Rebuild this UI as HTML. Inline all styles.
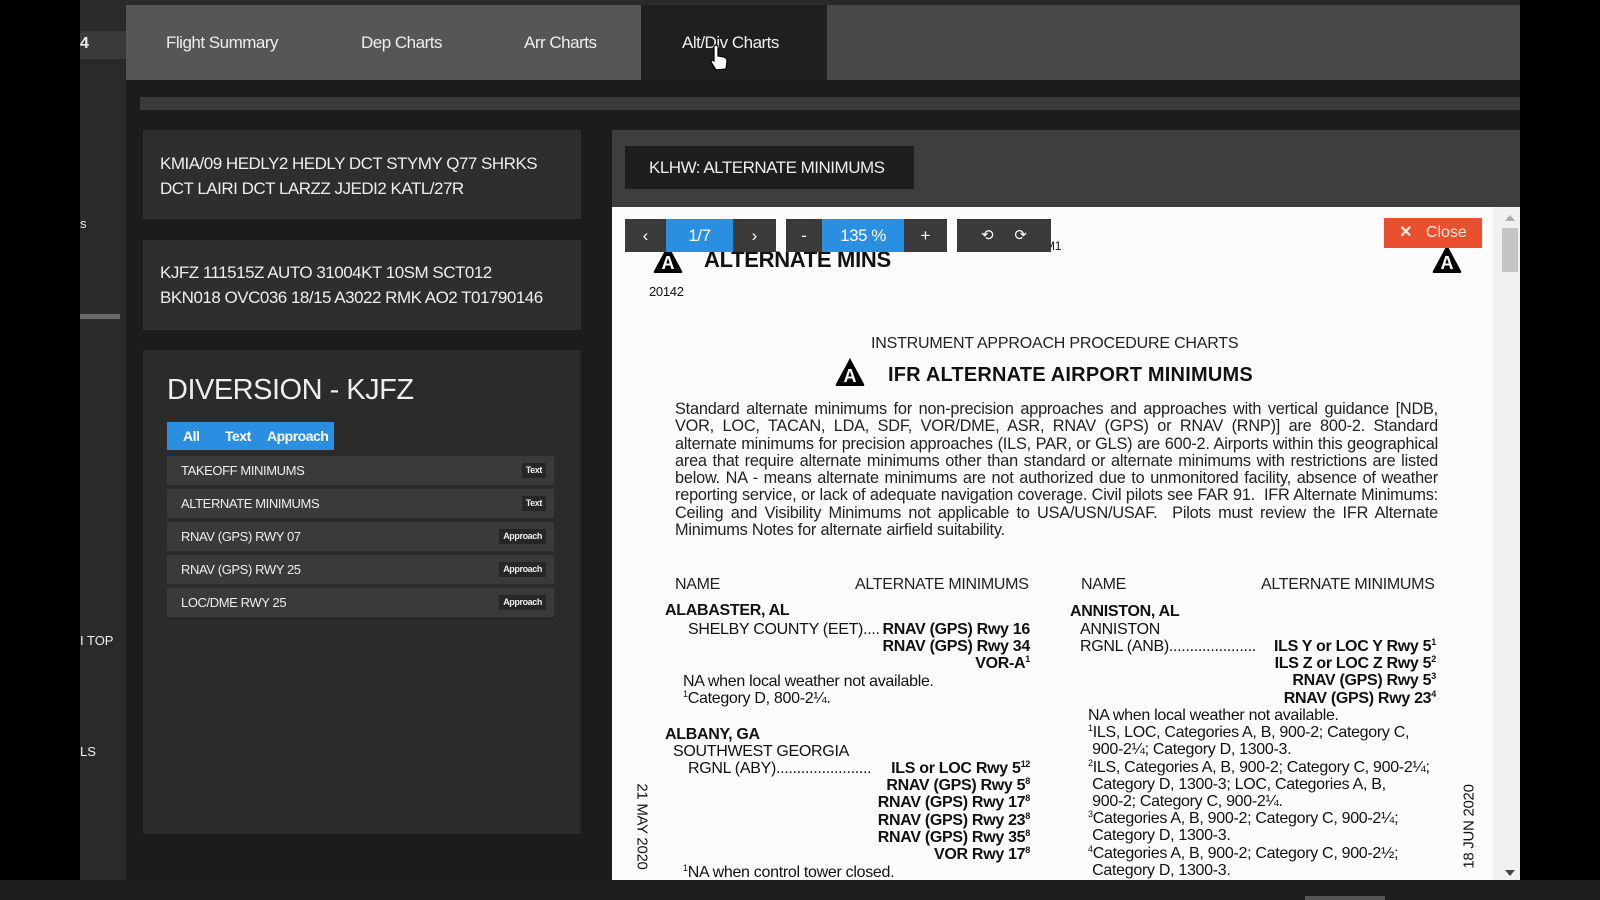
<!DOCTYPE html>
<html><head><meta charset="utf-8"><style>
*{margin:0;padding:0;box-sizing:border-box}
body{width:1600px;height:900px;background:#000;position:relative;overflow:hidden;font-family:"Liberation Sans",sans-serif}
.a{position:absolute;white-space:nowrap}
.n{font-family:"Liberation Sans Narrow","Liberation Sans",sans-serif;letter-spacing:-0.5px}
.w{color:#eee}
.doc{color:#111;font-family:"Liberation Sans Narrow","Liberation Sans",sans-serif;font-size:16px;line-height:17px;letter-spacing:-0.3px}
.r{text-align:right}
sup{font-size:9px;vertical-align:top;line-height:9px}
.tb{position:absolute;top:219px;height:33px;color:#fff;font-size:17px;text-align:center;line-height:33px}
.row{position:absolute;left:167px;width:387px;height:29px;background:#3a3a3a;color:#eee;font-size:13px;line-height:29px;padding-left:14px;font-family:"Liberation Sans Narrow","Liberation Sans",sans-serif;letter-spacing:-0.4px}
.bd{position:absolute;right:8px;top:7px;background:#262626;color:#eee;font-size:9px;line-height:15px;padding:0 4px;font-weight:bold}
.tri{position:absolute;width:0;height:0}
</style></head><body>
<div class="a" style="left:80px;top:0;width:46px;height:900px;background:#2a2a2a"></div>
<div class="a" style="left:80px;top:31px;width:46px;height:28px;background:#3a3a3a"></div>
<div class="a w" style="left:80px;top:35px;font-size:16px;font-weight:bold">4</div>
<div class="a w" style="left:80px;top:216px;font-size:13px">s</div>
<div class="a" style="left:80px;top:314px;width:40px;height:5px;background:#6a6a6a"></div>
<div class="a w" style="left:80px;top:633px;font-size:13px">I TOP</div>
<div class="a w" style="left:80px;top:744px;font-size:13px">LS</div>
<div class="a" style="left:126px;top:0;width:1394px;height:900px;background:#1c1c1c"></div>
<div class="a" style="left:126px;top:0;width:1394px;height:5px;background:#2a2a2a"></div>
<div class="a" style="left:126px;top:5px;width:515px;height:75px;background:#565656"></div>
<div class="a" style="left:641px;top:5px;width:186px;height:75px;background:#1f1f1f"></div>
<div class="a" style="left:827px;top:5px;width:693px;height:75px;background:#484848"></div>
<div class="a n w" style="left:166px;top:33px;font-size:17px">Flight Summary</div>
<div class="a n w" style="left:361px;top:33px;font-size:17px">Dep Charts</div>
<div class="a n w" style="left:524px;top:33px;font-size:17px">Arr Charts</div>
<div class="a n w" style="left:682px;top:33px;font-size:17px">Alt/Div Charts</div>
<div class="a" style="left:140px;top:97px;width:1380px;height:13px;background:#3a3a3a"></div>
<div class="a" style="left:143px;top:130px;width:438px;height:89px;background:#2e2e2e"></div>
<div class="a n w" style="left:160px;top:151px;font-size:17px;line-height:25px">KMIA/09 HEDLY2 HEDLY DCT STYMY Q77 SHRKS<br>DCT LAIRI DCT LARZZ JJEDI2 KATL/27R</div>
<div class="a" style="left:143px;top:240px;width:438px;height:90px;background:#2e2e2e"></div>
<div class="a n w" style="left:160px;top:260px;font-size:17px;line-height:25px">KJFZ 111515Z AUTO 31004KT 10SM SCT012<br>BKN018 OVC036 18/15 A3022 RMK AO2 T01790146</div>
<div class="a" style="left:143px;top:350px;width:438px;height:484px;background:#2b2b2b"></div>
<div class="a n w" style="left:167px;top:374px;font-size:29px">DIVERSION - KJFZ</div>
<div class="a" style="left:167px;top:422px;width:167px;height:28px;background:#2a8fe0"></div>
<div class="a n" style="left:183px;top:428px;font-size:14px;color:#fff;font-weight:bold">All</div>
<div class="a n" style="left:225px;top:428px;font-size:14px;color:#fff;font-weight:bold">Text</div>
<div class="a n" style="left:267px;top:428px;font-size:14px;color:#fff;font-weight:bold">Approach</div>
<div class="row" style="top:456px">TAKEOFF MINIMUMS<span class="bd">Text</span></div>
<div class="row" style="top:489px">ALTERNATE MINIMUMS<span class="bd">Text</span></div>
<div class="row" style="top:522px">RNAV (GPS) RWY 07<span class="bd">Approach</span></div>
<div class="row" style="top:555px">RNAV (GPS) RWY 25<span class="bd">Approach</span></div>
<div class="row" style="top:588px">LOC/DME RWY 25<span class="bd">Approach</span></div>
<div class="a" style="left:612px;top:130px;width:908px;height:77px;background:#3e3e3e"></div>
<div class="a" style="left:625px;top:146px;width:289px;height:43px;background:#1e1e1e"></div>
<div class="a n w" style="left:649px;top:158px;font-size:17px">KLHW: ALTERNATE MINIMUMS</div>
<div class="a" style="left:612px;top:207px;width:881px;height:673px;background:#fcfcfc"></div>
<div class="a" style="left:1493px;top:207px;width:27px;height:673px;background:#f0f0f0"></div>
<div class="a" style="left:1502px;top:228px;width:16px;height:44px;background:#c4c4c4"></div>
<div class="tri" style="left:1505px;top:215px;border:5px solid transparent;border-bottom:6px solid #aaa;border-top:0"></div>
<div class="tri" style="left:1505px;top:870px;border:5px solid transparent;border-top:6px solid #444;border-bottom:0"></div>
<div class="a" style="left:0;top:880px;width:1600px;height:20px;background:#1e1e1e"></div>
<div class="a" style="left:1305px;top:896px;width:80px;height:4px;background:#555"></div>
<div class="a doc" style="left:704px;top:249px;font-size:22px;line-height:22px;font-weight:bold;font-family:'Liberation Sans',sans-serif">ALTERNATE MINS</div>
<div class="a doc" style="left:1045px;top:238px;font-size:12px">M1</div>
<svg class="a" style="left:651px;top:243px" width="34" height="32" viewBox="0 0 34 32"><path d="M17 2 L31 28 Q32 30 30 30 L4 30 Q2 30 3 28 Z" fill="#000"/><text x="17" y="26" font-family="Liberation Sans" font-weight="bold" font-size="18" fill="#fff" text-anchor="middle">A</text></svg>
<svg class="a" style="left:1430px;top:243px" width="34" height="32" viewBox="0 0 34 32"><path d="M17 2 L31 28 Q32 30 30 30 L4 30 Q2 30 3 28 Z" fill="#000"/><text x="17" y="26" font-family="Liberation Sans" font-weight="bold" font-size="18" fill="#fff" text-anchor="middle">A</text></svg>
<div class="a doc" style="left:649px;top:283px;font-size:13px">20142</div>
<div class="a doc" style="left:871px;top:335px;font-size:16px;letter-spacing:-0.2px;color:#222">INSTRUMENT APPROACH PROCEDURE CHARTS</div>
<svg class="a" style="left:833px;top:355px" width="34" height="34" viewBox="0 0 34 32"><path d="M17 2 L31 28 Q32 30 30 30 L4 30 Q2 30 3 28 Z" fill="#000"/><text x="17" y="26" font-family="Liberation Sans" font-weight="bold" font-size="18" fill="#fff" text-anchor="middle">A</text></svg>
<div class="a doc" style="left:888px;top:364px;font-size:20px;line-height:22px;font-weight:bold;font-family:'Liberation Sans',sans-serif;letter-spacing:0.2px">IFR ALTERNATE AIRPORT MINIMUMS</div>
<div class="a doc" style="left:675px;top:401px;width:763px;white-space:normal;text-align:justify;font-size:16.3px;line-height:17.3px;letter-spacing:-0.2px;color:#222">Standard alternate minimums for non-precision approaches and approaches with vertical guidance [NDB, VOR, LOC, TACAN, LDA, SDF, VOR/DME, ASR, RNAV (GPS) or RNAV (RNP)] are 800-2. Standard alternate minimums for precision approaches (ILS, PAR, or GLS) are 600-2. Airports within this geographical area that require alternate minimums other than standard or alternate minimums with restrictions are listed below. NA - means alternate minimums are not authorized due to unmonitored facility, absence of weather reporting service, or lack of adequate navigation coverage. Civil pilots see FAR 91. &nbsp;IFR Alternate Minimums: Ceiling and Visibility Minimums not applicable to USA/USN/USAF. &nbsp;Pilots must review the IFR Alternate Minimums Notes for alternate airfield suitability.</div>
<div class="a doc" style="left:675px;top:576px;color:#222">NAME</div>
<div class="a doc" style="left:855px;top:576px;color:#222">ALTERNATE MINIMUMS</div>
<div class="a doc" style="left:1081px;top:576px;color:#222">NAME</div>
<div class="a doc" style="left:1261px;top:576px;color:#222">ALTERNATE MINIMUMS</div>
<div class="a doc" style="left:665px;top:602px;font-weight:bold;font-family:'Liberation Sans',sans-serif;font-size:16px">ALABASTER, AL</div>
<div class="a doc" style="left:688px;top:621px">SHELBY COUNTY (EET)....</div>
<div class="a doc r" style="left:830px;width:200px;top:621px;font-weight:bold;line-height:17px">RNAV (GPS) Rwy 16<br>RNAV (GPS) Rwy 34<br>VOR-A<sup>1</sup></div>
<div class="a doc" style="left:683px;top:673px;line-height:17px">NA when local weather not available.<br><sup>1</sup>Category D, 800-2¼.</div>
<div class="a doc" style="left:665px;top:726px;font-weight:bold;font-family:'Liberation Sans',sans-serif;font-size:16px">ALBANY, GA</div>
<div class="a doc" style="left:673px;top:743px">SOUTHWEST GEORGIA</div>
<div class="a doc" style="left:688px;top:760px">RGNL (ABY).......................</div>
<div class="a doc r" style="left:830px;width:200px;top:760px;font-weight:bold;line-height:17.2px">ILS or LOC Rwy 5<sup>12</sup><br>RNAV (GPS) Rwy 5<sup>8</sup><br>RNAV (GPS) Rwy 17<sup>8</sup><br>RNAV (GPS) Rwy 23<sup>8</sup><br>RNAV (GPS) Rwy 35<sup>8</sup><br>VOR Rwy 17<sup>8</sup></div>
<div class="a doc" style="left:683px;top:864px"><sup>1</sup>NA when control tower closed.</div>
<div class="a doc" style="left:1070px;top:603px;font-weight:bold;font-family:'Liberation Sans',sans-serif;font-size:16px">ANNISTON, AL</div>
<div class="a doc" style="left:1080px;top:621px">ANNISTON</div>
<div class="a doc" style="left:1080px;top:638px">RGNL (ANB).....................</div>
<div class="a doc r" style="left:1236px;width:200px;top:638px;font-weight:bold;line-height:17.2px">ILS Y or LOC Y Rwy 5<sup>1</sup><br>ILS Z or LOC Z Rwy 5<sup>2</sup><br>RNAV (GPS) Rwy 5<sup>3</sup><br>RNAV (GPS) Rwy 23<sup>4</sup></div>
<div class="a doc" style="left:1088px;top:707px;line-height:17.2px">NA when local weather not available.<br><sup>1</sup>ILS, LOC, Categories A, B, 900-2; Category C,<br>&nbsp;900-2¼; Category D, 1300-3.<br><sup>2</sup>ILS, Categories A, B, 900-2; Category C, 900-2¼;<br>&nbsp;Category D, 1300-3; LOC, Categories A, B,<br>&nbsp;900-2; Category C, 900-2¼.<br><sup>3</sup>Categories A, B, 900-2; Category C, 900-2¼;<br>&nbsp;Category D, 1300-3.<br><sup>4</sup>Categories A, B, 900-2; Category C, 900-2½;<br>&nbsp;Category D, 1300-3.</div>
<div class="a doc" style="left:592px;top:818px;transform:rotate(90deg);transform-origin:center;width:100px;text-align:center;font-family:'Liberation Sans',sans-serif;font-size:15px">21 MAY 2020</div>
<div class="a doc" style="left:1419px;top:818px;transform:rotate(-90deg);transform-origin:center;width:100px;text-align:center;font-family:'Liberation Sans',sans-serif;font-size:15px">18 JUN 2020</div>
<div class="tb" style="left:625px;width:41px;background:#3a3a3a">‹</div>
<div class="tb n" style="left:666px;width:67px;background:#2a8fe0">1/7</div>
<div class="tb" style="left:733px;width:43px;background:#3a3a3a">›</div>
<div class="tb" style="left:786px;width:36px;background:#3a3a3a">-</div>
<div class="tb n" style="left:822px;width:82px;background:#2a8fe0">135 %</div>
<div class="tb" style="left:904px;width:43px;background:#3a3a3a">+</div>
<div class="tb" style="left:957px;width:94px;background:#3a3a3a;font-size:15px">⟲&nbsp;&nbsp;&nbsp;&nbsp;&nbsp;⟳</div>
<div class="a" style="left:1384px;top:218px;width:98px;height:30px;background:#e8502f;color:#ffe8d8;font-size:16px;line-height:30px;text-align:center"><b>✕</b>&nbsp;&nbsp;&nbsp;Close</div>
<svg class="a" style="left:709px;top:44px" width="20" height="30" viewBox="0 0 20 30"><path d="M5 2 Q7 0 9 2 L9 12 L15 13 Q18 14 18 17 L17 25 L7 26 L2 18 Q2 15 5 17 Z" fill="#fff" stroke="#000" stroke-width="1.2"/></svg>
</body></html>
